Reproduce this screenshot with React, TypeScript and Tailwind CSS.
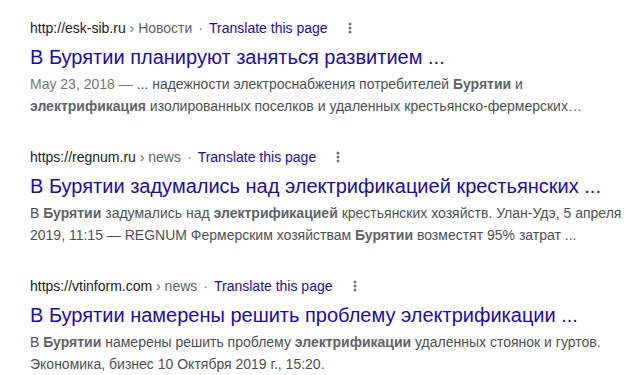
import React from 'react';

type Result = {
  domain: string;
  crumb: string;
  title: string;
  lines: React.ReactNode[];
};

const B = ({ children }: { children: React.ReactNode }) => (
  <b className="font-bold text-[#5f6368]">{children}</b>
);

const results: Result[] = [
  {
    domain: 'http://esk-sib.ru',
    crumb: 'Новости',
    title: 'В Бурятии планируют заняться развитием ...',
    lines: [
      <>
        <span className="text-[#70757a]">May 23, 2018 — </span>... надежности электроснабжения потребителей <B>Бурятии</B> и
      </>,
      <>
        <B>электрификация</B> изолированных поселков и удаленных крестьянско-фермерских…
      </>,
    ],
  },
  {
    domain: 'https://regnum.ru',
    crumb: 'news',
    title: 'В Бурятии задумались над электрификацией крестьянских ...',
    lines: [
      <>
        В <B>Бурятии</B> задумались над <B>электрификацией</B> крестьянских хозяйств. Улан-Удэ, 5 апреля
      </>,
      <>
        2019, 11:15 — REGNUM Фермерским хозяйствам <B>Бурятии</B> возместят 95% затрат ...
      </>,
    ],
  },
  {
    domain: 'https://vtinform.com',
    crumb: 'news',
    title: 'В Бурятии намерены решить проблему электрификации ...',
    lines: [
      <>
        В <B>Бурятии</B> намерены решить проблему <B>электрификации</B> удаленных стоянок и гуртов.
      </>,
      <>Экономика, бизнес 10 Октября 2019 г., 15:20.</>,
    ],
  },
];

const MoreDots = () => (
  <svg width="4" height="12" viewBox="0 0 4 12" className="ml-[20px] shrink-0">
    <circle cx="2" cy="2" r="1.5" fill="#70757a" />
    <circle cx="2" cy="6" r="1.5" fill="#70757a" />
    <circle cx="2" cy="10" r="1.5" fill="#70757a" />
  </svg>
);

export default function App() {
  return (
    <div
      className="w-[626px] h-[375px] overflow-hidden bg-white pl-[30px] pt-[18px]"
      style={{ fontFamily: '"Liberation Sans", Arial, sans-serif' }}
    >
      <div className="flex flex-col gap-[30px]">
        {results.map((r, i) => (
          <div key={i} className="flex flex-col">
            <div className="flex items-center h-[20px] text-[14px] leading-[20px] whitespace-nowrap">
              <span className="text-[#202124]">{r.domain}</span>
              <span className="text-[#5f6368]">&nbsp;› {r.crumb}</span>
              <span className="text-[#70757a] px-[6px]">·</span>
              <span className="text-[#1a0dab]">Translate this page</span>
              <MoreDots />
            </div>
            <div className="mt-[6px] text-[20px] leading-[26px] text-[#1a0dab] whitespace-nowrap">
              {r.title}
            </div>
            <div className="mt-[3px] text-[14px] leading-[22px] text-[#4d5156]">
              {r.lines.map((l, j) => (
                <div key={j} className="whitespace-nowrap">
                  {l}
                </div>
              ))}
            </div>
          </div>
        ))}
      </div>
    </div>
  );
}
